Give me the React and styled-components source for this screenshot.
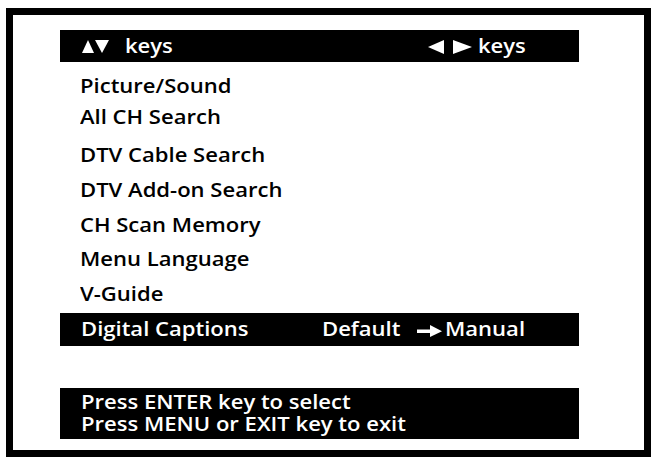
import React from "react";
import styled, { createGlobalStyle } from "styled-components";

const Global = createGlobalStyle`
  html, body { margin: 0; padding: 0; background: #fff; overflow: hidden; }
  body { font-family: "Open Sans", "Noto Sans", sans-serif; }
`;

const Frame = styled.div`
  box-sizing: border-box;
  margin: 8px 0 0 6px;
  width: 645px;
  height: 449px;
  border: 7px solid #000;
  padding: 15px 0 0 47px;
`;

const Bar = styled.div`
  width: 519px;
  background: #000;
  color: #fff;
  box-sizing: border-box;
`;

const Header = styled(Bar)`
  height: 32px;
  line-height: 32px;
  display: grid;
  grid-template-columns: 346px auto;
  padding-left: 22px;
`;

const Text = styled.span`
  display: inline-block;
  font-size: ${(p) => p.$size || 19}px;
  font-weight: 600;
  white-space: nowrap;
  transform: scaleX(1.16);
  transform-origin: left center;
`;

const KeyGroup = styled.div`
  display: flex;
  align-items: center;
  gap: ${(p) => p.$gap}px;
`;

const Glyphs = styled.svg`
  display: block;
  flex: none;
`;

const List = styled.div`
  margin-top: 11px;
`;

const Item = styled.div`
  height: ${(p) => p.$h}px;
  line-height: 26px;
  padding-left: 20px;
  color: #000;
`;

const Selected = styled(Bar)`
  height: 33px;
  line-height: 33px;
  display: grid;
  grid-template-columns: 241px 95px 28px auto;
  align-items: center;
  padding-left: 21px;
`;

const Help = styled(Bar)`
  margin-top: 42px;
  height: 51px;
  padding: 3px 0 0 21px;
  line-height: 22px;
  display: flex;
  flex-direction: column;
  align-items: flex-start;
`;

const items = [
  ["Picture/Sound", 31],
  ["All CH Search", 38],
  ["DTV Cable Search", 35],
  ["DTV Add-on Search", 35],
  ["CH Scan Memory", 34],
  ["Menu Language", 35],
  ["V-Guide", 32],
];

export default function App() {
  return (
    <>
      <Global />
      <Frame>
        <Header>
          <KeyGroup $gap={16}>
            <Glyphs width="27" height="13" viewBox="0 0 27 13" style={{ marginTop: 1 }}>
              <polygon points="0,13 6,0 12,13" fill="#fff" />
              <polygon points="13,0 27,0 20,13" fill="#fff" />
            </Glyphs>
            <Text>keys</Text>
          </KeyGroup>
          <KeyGroup $gap={6}>
            <Glyphs width="44" height="14" viewBox="0 0 44 14" style={{ marginTop: 2 }}>
              <polygon points="0,7 16,0 16,14" fill="#fff" />
              <polygon points="25,0 44,7 25,14" fill="#fff" />
            </Glyphs>
            <Text>keys</Text>
          </KeyGroup>
        </Header>
        <List>
          {items.map(([label, h]) => (
            <Item key={label} $h={h}>
              <Text>{label}</Text>
            </Item>
          ))}
        </List>
        <Selected>
          <Text>Digital Captions</Text>
          <Text>Default</Text>
          <Glyphs width="25" height="12" viewBox="0 0 25 12" style={{ marginTop: 2 }}>
            <rect x="0" y="4.5" width="15" height="3.5" fill="#fff" />
            <polygon points="13,0 25,6.25 13,12" fill="#fff" />
          </Glyphs>
          <Text>Manual</Text>
        </Selected>
        <Help>
          <Text>Press ENTER key to select</Text>
          <Text>Press MENU or EXIT key to exit</Text>
        </Help>
      </Frame>
    </>
  );
}
